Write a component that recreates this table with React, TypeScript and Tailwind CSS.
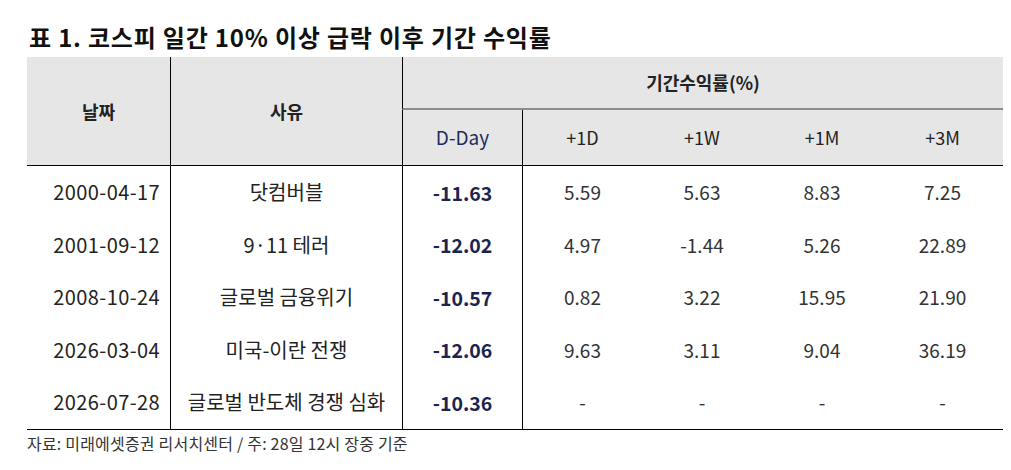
const cols = "grid grid-cols-[143px_232px_120px_120px_120px_120px_121px]"

const rows = [
  { date: "2000-04-17", reason: "닷컴버블", dday: "-11.63", vals: ["5.59", "5.63", "8.83", "7.25"] },
  { date: "2001-09-12", reason: "9·11 테러", dday: "-12.02", vals: ["4.97", "-1.44", "5.26", "22.89"] },
  { date: "2008-10-24", reason: "글로벌 금융위기", dday: "-10.57", vals: ["0.82", "3.22", "15.95", "21.90"] },
  { date: "2026-03-04", reason: "미국-이란 전쟁", dday: "-12.06", vals: ["9.63", "3.11", "9.04", "36.19"] },
  { date: "2026-07-28", reason: "글로벌 반도체 경쟁 심화", dday: "-10.36", vals: ["-", "-", "-", "-"] },
]

export default function App() {
  return (
    <div
      className="w-[1011px] h-[470px] bg-white px-[27px] pt-[22px] text-[#222]"
      style={{ fontFamily: '"Noto Sans CJK KR", "Noto Sans", sans-serif' }}
    >
      <h1 className="text-[24px] leading-[30px] font-bold tracking-[0.8px] text-[#111] mb-[5px] ml-[2px]">
        표 1. 코스피 일간 10% 이상 급락 이후 기간 수익률
      </h1>

      <div className="w-[976px]">
        {/* header */}
        <div className={`${cols} grid-rows-[53px_55px] bg-[#e6e6e6] border-b border-black text-[18px]`}>
          <div className="row-span-2 flex items-center justify-center font-bold">날짜</div>
          <div className="row-span-2 flex items-center justify-center font-bold border-l border-black">사유</div>
          <div className="col-span-5 flex items-center justify-center font-bold border-l border-black border-b-2 border-b-[#8c8c8c]">
            기간수익률(%)
          </div>
          <div className="flex items-center justify-center border-l border-black text-[#1f2b5e] text-[19px]">D-Day</div>
          <div className="flex items-center justify-center border-l border-black">+1D</div>
          <div className="flex items-center justify-center">+1W</div>
          <div className="flex items-center justify-center">+1M</div>
          <div className="flex items-center justify-center">+3M</div>
        </div>

        {/* body */}
        <div className="border-b border-black text-[20px]">
          {rows.map((r) => (
            <div key={r.date} className={`${cols} h-[52.5px]`}>
              <div className="flex items-center justify-end pr-[10px] tracking-[0.4px]">{r.date}</div>
              <div className="flex items-center justify-center border-l border-black">{r.reason}</div>
              <div className="flex items-center justify-center border-l border-black font-bold text-[#1b2451] text-[19.5px]">
                {r.dday}
              </div>
              {r.vals.map((v, i) => (
                <div
                  key={i}
                  className={`flex items-center justify-center text-[#333] text-[19px] ${i === 0 ? "border-l border-black" : ""}`}
                >
                  {v}
                </div>
              ))}
            </div>
          ))}
        </div>

        <p className="mt-[1px] text-[16px] leading-[24px] tracking-[0.2px] text-[#333]">
          자료: 미래에셋증권 리서치센터 / 주: 28일 12시 장중 기준
        </p>
      </div>
    </div>
  )
}
